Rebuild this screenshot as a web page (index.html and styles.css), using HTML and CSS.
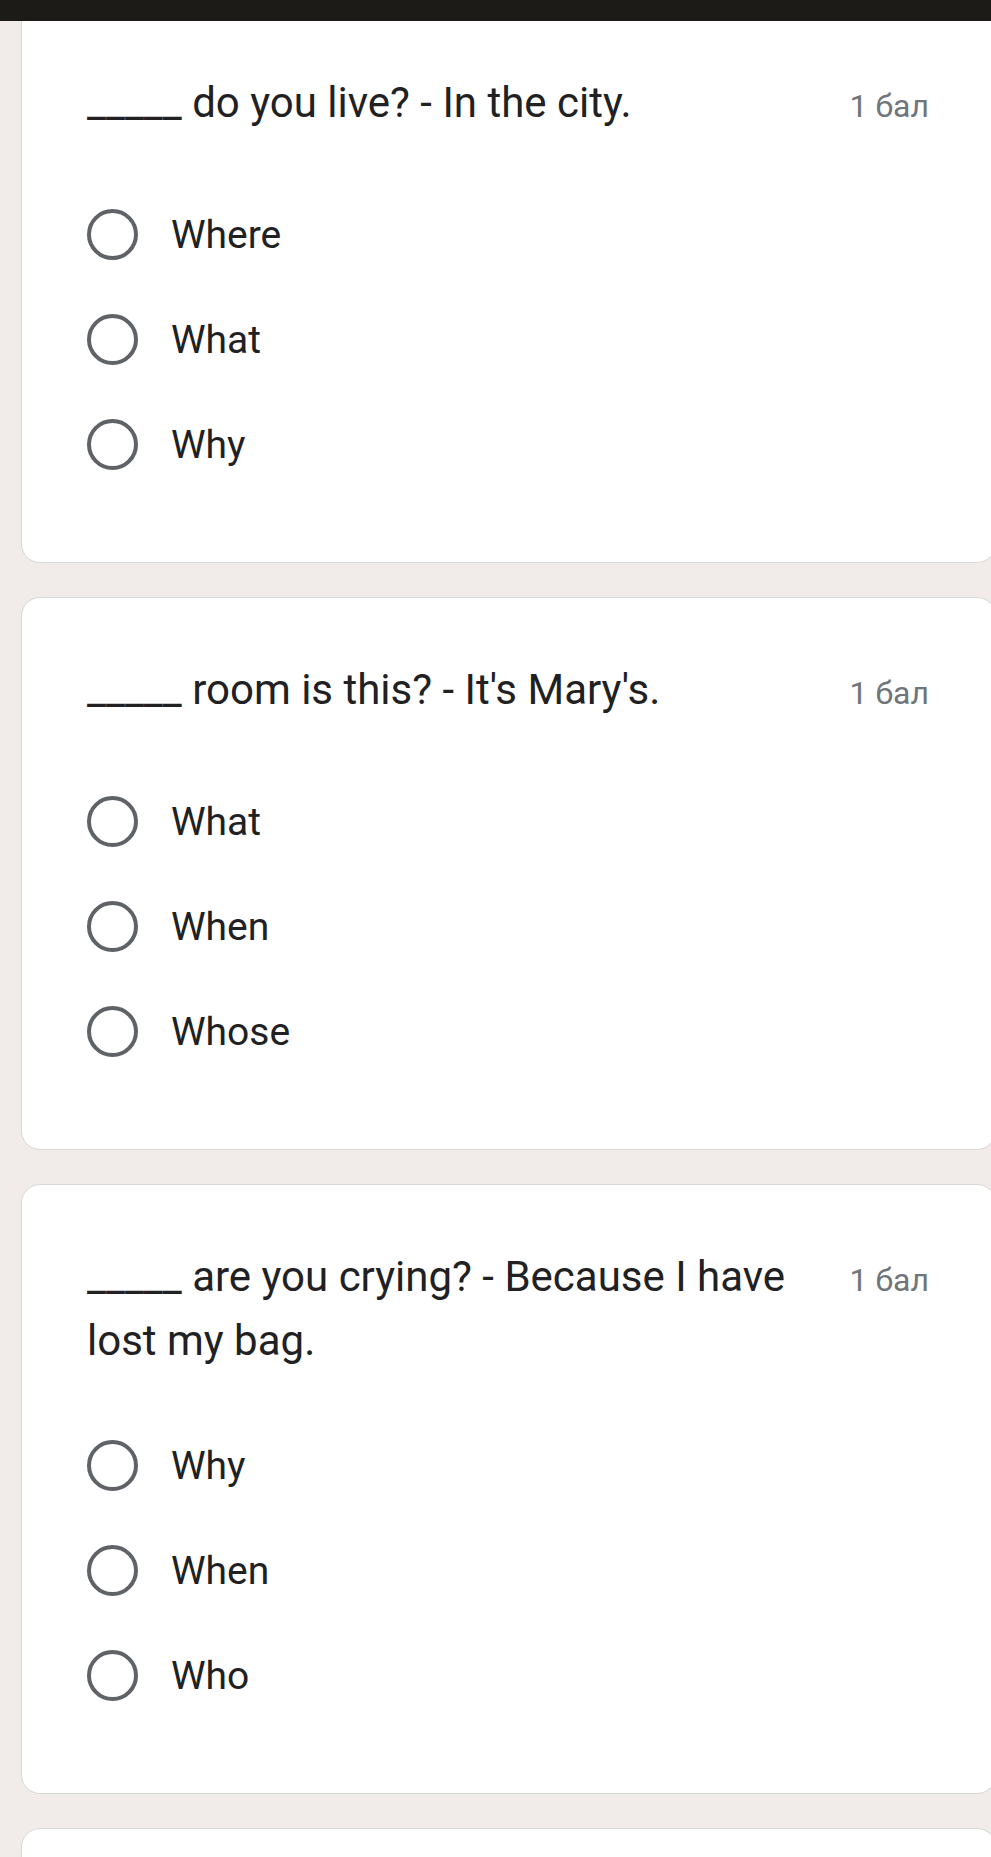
FILE: index.html
```html
<!DOCTYPE html>
<html lang="uk">
<head>
<meta charset="utf-8">
<title>Quiz</title>
<link rel="stylesheet" href="styles.css">
</head>
<body>
<div class="topbar"></div>
<main class="list">
  <section class="card first">
    <div class="q-head">
      <div class="q-text">_____ do you live? - In the city.</div>
      <div class="q-points">1 бал</div>
    </div>
    <div class="options">
      <label class="opt"><span class="radio"></span><span class="opt-text">Where</span></label>
      <label class="opt"><span class="radio"></span><span class="opt-text">What</span></label>
      <label class="opt"><span class="radio"></span><span class="opt-text">Why</span></label>
    </div>
  </section>
  <section class="card">
    <div class="q-head">
      <div class="q-text">_____ room is this? - It's Mary's.</div>
      <div class="q-points">1 бал</div>
    </div>
    <div class="options">
      <label class="opt"><span class="radio"></span><span class="opt-text">What</span></label>
      <label class="opt"><span class="radio"></span><span class="opt-text">When</span></label>
      <label class="opt"><span class="radio"></span><span class="opt-text">Whose</span></label>
    </div>
  </section>
  <section class="card">
    <div class="q-head">
      <div class="q-text">_____ are you crying? - Because I have lost my bag.</div>
      <div class="q-points">1 бал</div>
    </div>
    <div class="options">
      <label class="opt"><span class="radio"></span><span class="opt-text">Why</span></label>
      <label class="opt"><span class="radio"></span><span class="opt-text">When</span></label>
      <label class="opt"><span class="radio"></span><span class="opt-text">Who</span></label>
    </div>
  </section>
  <section class="card">
    <div class="q-head">
      <div class="q-text">&nbsp;</div>
    </div>
  </section>
</main>
</body>
</html>
```

FILE: styles.css
```css
html, body {
  margin: 0;
  padding: 0;
  overflow: hidden;
  background: #f1ebe9;
}

body {
  font-family: Roboto, "Noto Sans", "Liberation Sans", sans-serif;
  color: #202124;
}

.topbar {
  position: fixed;
  top: 0;
  left: 0;
  right: 0;
  height: 21px;
  background: #1c1b17;
  z-index: 10;
}

.list {
  display: flex;
  flex-direction: column;
  gap: 34px;
  padding-top: 10px;
  padding-left: 21px;
  width: 975px;
}

.card {
  background: #ffffff;
  border: 1px solid #dad8d6;
  border-radius: 19px;
  padding: 60px 66px 65px 65px;
  box-sizing: border-box;
  width: 975px;
  flex: none;
}

.card.first {
  border-top-left-radius: 0;
  border-top-right-radius: 0;
}

.q-head {
  display: flex;
  align-items: flex-start;
  gap: 40px;
}

.q-text {
  flex: 1;
  font-size: 42px;
  line-height: 64px;
  color: #212123;
}

.q-points {
  flex: none;
  font-size: 32px;
  line-height: 64px;
  color: #70757a;
  padding-top: 3px;
  padding-bottom: 4px;
}

.options {
  display: flex;
  flex-direction: column;
  margin-top: 40px;
}

.opt {
  display: flex;
  align-items: center;
  height: 105px;
  gap: 33px;
}

.radio {
  width: 51px;
  height: 51px;
  box-sizing: border-box;
  border: 4.5px solid #5f6368;
  border-radius: 50%;
  flex: none;
}

.opt-text {
  font-size: 39px;
  line-height: 48px;
  color: #212123;
}
```
